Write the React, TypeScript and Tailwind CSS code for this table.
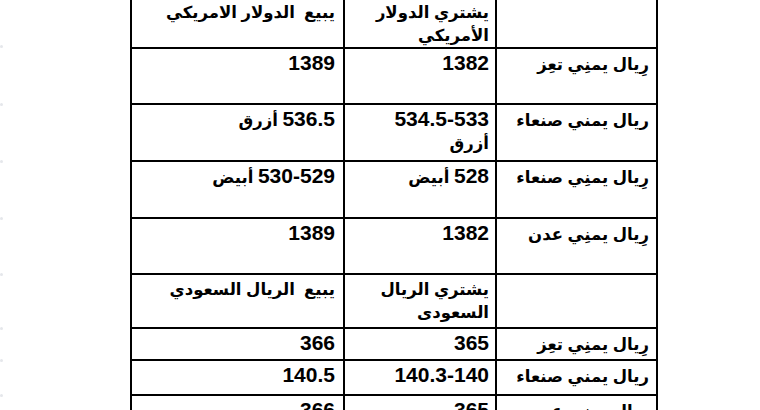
import React from "react";

const font = { fontFamily: '"Liberation Sans", Arial, "DejaVu Sans", sans-serif' };

type Part = { t: string; ar?: boolean; br?: boolean };
type Row = { h: string; a: string; b: Part[]; c: Part[] };

const N = (t: string): Part => ({ t });
const A = (t: string): Part => ({ t, ar: true });
const BR: Part = { t: "", br: true };

const rows: Row[] = [
  { h: "h-[51px]", a: "", b: [A("يشتري الدولار الأمريكي")], c: [A("يبيع  الدولار الامريكي")] },
  { h: "h-[56px]", a: "رِيال يمنِي تعِز", b: [N("1382")], c: [N("1389")] },
  { h: "h-[57px]", a: "ريال يمني صنعاء", b: [N("534.5-533"), BR, A("أزرق")], c: [N("536.5"), A(" أزرق")] },
  { h: "h-[57px]", a: "رِيال يمنِي صنعاء", b: [N("528"), A(" أبيض")], c: [N("530-529"), A(" أبيض")] },
  { h: "h-[56px]", a: "رِيال يمنِي عدن", b: [N("1382")], c: [N("1389")] },
  { h: "h-[54px]", a: "", b: [A("يشتري الريال السعودى")], c: [A("يبيع  الريال السعودي")] },
  { h: "h-[32px]", a: "رِيال يمنِي تعِز", b: [N("365")], c: [N("366")] },
  { h: "h-[35px]", a: "ريال يمني صنعاء", b: [N("140.3-140")], c: [N("140.5")] },
  { h: "h-[40px]", a: "رِيال يمنِي عدن", b: [N("365")], c: [N("366")] },
];

function Parts({ parts }: { parts: Part[] }) {
  return (
    <>
      {parts.map((p, i) =>
        p.br ? (
          <br key={i} />
        ) : p.ar ? (
          <span key={i} className="text-[16.5px] font-bold whitespace-pre-wrap">
            {p.t}
          </span>
        ) : (
          <span key={i} className="text-[21px] font-bold">
            {p.t}
          </span>
        )
      )}
    </>
  );
}

export default function App() {
  return (
    <div className="w-[760px] h-[410px] overflow-hidden bg-white relative" style={font}>
      {[45, 103, 160, 217, 273, 327, 359, 394].map((y) => (
        <span key={y} className="absolute left-0 w-[3px] h-[3px] rounded-full bg-gray-200" style={{ top: y }} />
      ))}
      <div className="-mt-[4px] ml-[130px] w-[526px]">
        <table dir="rtl" className="table-fixed w-[526px] border-collapse text-black">
          <colgroup>
            <col className="w-[161px]" />
            <col className="w-[152px]" />
            <col className="w-[213px]" />
          </colgroup>
          <tbody>
            {rows.map((r, i) => (
              <tr key={i} className={r.h}>
                <td className="border-2 border-black align-top text-right pr-[7px] pt-[4px] text-[16.5px] leading-[22px] font-bold">
                  {r.a}
                </td>
                <td className="border-2 border-black align-top text-right pr-[6px] pt-[3px] leading-[22px]">
                  <Parts parts={r.b} />
                </td>
                <td className="border-2 border-black align-top text-right pr-[8px] pt-[3px] leading-[22px]">
                  <Parts parts={r.c} />
                </td>
              </tr>
            ))}
          </tbody>
        </table>
      </div>
    </div>
  );
}
